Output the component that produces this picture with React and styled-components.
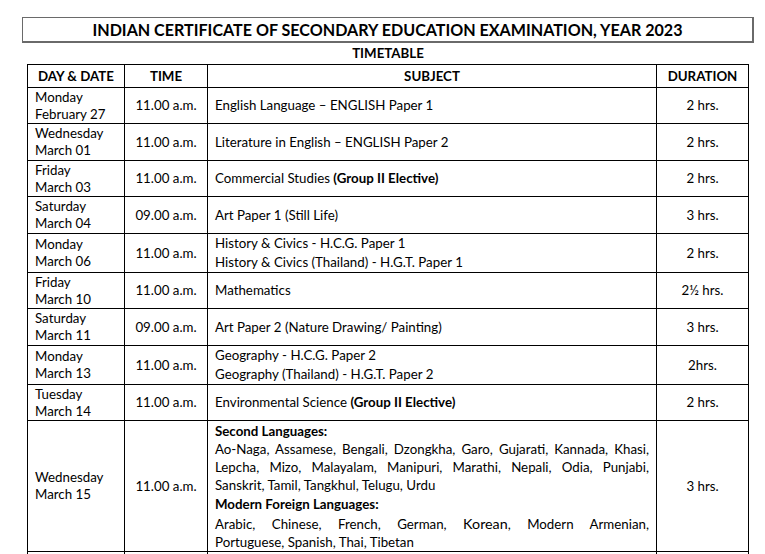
import React from 'react';
import styled, { createGlobalStyle } from 'styled-components';

const GlobalStyle = createGlobalStyle`
  html, body {
    margin: 0;
    padding: 0;
    background: #fff;
  }
  body {
    font-family: Lato, 'Open Sans', sans-serif;
    color: #000;
    overflow: hidden;
  }
`;

const rows = [
  { day: 'Monday', date: 'February 27', time: '11.00 a.m.', subject: ['English Language – ENGLISH Paper 1'], duration: '2 hrs.', h: 36 },
  { day: 'Wednesday', date: 'March 01', time: '11.00 a.m.', subject: ['Literature in English – ENGLISH Paper 2'], duration: '2 hrs.', h: 37 },
  { day: 'Friday', date: 'March 03', time: '11.00 a.m.', subject: ['Commercial Studies '], bold: '(Group II Elective)', duration: '2 hrs.', h: 36 },
  { day: 'Saturday', date: 'March 04', time: '09.00 a.m.', subject: ['Art Paper 1 (Still Life)'], duration: '3 hrs.', h: 37 },
  { day: 'Monday', date: 'March 06', time: '11.00 a.m.', subject: ['History & Civics - H.C.G. Paper 1', 'History & Civics (Thailand) - H.G.T. Paper 1'], duration: '2 hrs.', h: 39 },
  { day: 'Friday', date: 'March 10', time: '11.00 a.m.', subject: ['Mathematics'], duration: '2½ hrs.', h: 36 },
  { day: 'Saturday', date: 'March 11', time: '09.00 a.m.', subject: ['Art Paper 2 (Nature Drawing/ Painting)'], duration: '3 hrs.', h: 37 },
  { day: 'Monday', date: 'March 13', time: '11.00 a.m.', subject: ['Geography - H.C.G. Paper 2', 'Geography (Thailand) - H.G.T. Paper 2'], duration: '2hrs.', h: 39 },
  { day: 'Tuesday', date: 'March 14', time: '11.00 a.m.', subject: ['Environmental Science '], bold: '(Group II Elective)', duration: '2 hrs.', h: 36 },
];

const App = () => {
  return (
    <>
      <GlobalStyle />
      <Page>
        <TitleBox>INDIAN CERTIFICATE OF SECONDARY EDUCATION EXAMINATION, YEAR 2023</TitleBox>
        <SubTitle>TIMETABLE</SubTitle>
        <Table>
          <colgroup>
            <col style={{ width: 97 }} />
            <col style={{ width: 83 }} />
            <col style={{ width: 449 }} />
            <col style={{ width: 92 }} />
          </colgroup>
          <thead>
            <tr>
              <Th>DAY &amp; DATE</Th>
              <Th>TIME</Th>
              <Th>SUBJECT</Th>
              <Th>DURATION</Th>
            </tr>
          </thead>
          <tbody>
            {rows.map((r, i) => (
              <Row key={i} $h={r.h}>
                <DayCell>
                  {r.day}
                  <br />
                  {r.date}
                </DayCell>
                <CenterCell>{r.time}</CenterCell>
                <SubjectCell>
                  {r.subject.length > 1 ? (
                    r.subject.map((s, j) => <SubLine key={j}>{s}</SubLine>)
                  ) : (
                    <>
                      {r.subject[0]}
                      {r.bold && <b>{r.bold}</b>}
                    </>
                  )}
                </SubjectCell>
                <CenterCell>{r.duration}</CenterCell>
              </Row>
            ))}
            <Row $h={131}>
              <DayCell>
                Wednesday
                <br />
                March 15
              </DayCell>
              <CenterCell>11.00 a.m.</CenterCell>
              <LangCell>
                <LangHead>Second Languages:</LangHead>
                <LangLine $full>Ao-Naga, Assamese, Bengali, Dzongkha, Garo, Gujarati, Kannada, Khasi,</LangLine>
                <LangLine $full>Lepcha, Mizo, Malayalam, Manipuri, Marathi, Nepali, Odia, Punjabi,</LangLine>
                <LangLine>Sanskrit, Tamil, Tangkhul, Telugu, Urdu</LangLine>
                <LangHead $gap>Modern Foreign Languages:</LangHead>
                <LangLine $full $gap>
                  Arabic, Chinese, French, German, <Big>Korean</Big>, Modern Armenian,
                </LangLine>
                <LangLine>Portuguese, Spanish, Thai, Tibetan</LangLine>
              </LangCell>
              <CenterCell>3 hrs.</CenterCell>
            </Row>
            <Row $h={30}>
              <DayCell />
              <CenterCell />
              <SubjectCell />
              <CenterCell />
            </Row>
          </tbody>
        </Table>
      </Page>
    </>
  );
};

export default App;

const Page = styled.div`
  padding: 17px 0 0 22px;
  width: 732px;
`;

const TitleBox = styled.div`
  box-sizing: border-box;
  width: 732px;
  height: 26px;
  border: 1px solid #6a6a6a;
  border-right-width: 2px;
  border-bottom-width: 2px;
  text-align: center;
  font-weight: 700;
  font-size: 16.1px;
  line-height: 23px;
`;

const SubTitle = styled.div`
  text-align: center;
  font-weight: 700;
  font-size: 13.3px;
  line-height: 20px;
  height: 21px;
`;

const Table = styled.table`
  margin-left: 5px;
  width: 722px;
  border-collapse: collapse;
  table-layout: fixed;
  font-size: 13.3px;
  line-height: 17px;
  td, th {
    border: 1px solid #000;
  }
`;

const Th = styled.th`
  height: 22px;
  padding: 0;
  font-weight: 700;
  text-align: center;
  line-height: 22px;
`;

const Row = styled.tr`
  height: ${p => p.$h}px;
`;

const DayCell = styled.td`
  padding: 0 0 0 7px;
  line-height: 17px;
  vertical-align: middle;
`;

const CenterCell = styled.td`
  padding: 0;
  text-align: center;
  vertical-align: middle;
`;

const SubjectCell = styled.td`
  padding: 0 7px;
  vertical-align: middle;
  b {
    font-weight: 700;
  }
`;

const SubLine = styled.div`
  line-height: 19px;
`;

const LangCell = styled.td`
  padding: 0 7px;
  vertical-align: middle;
`;

const LangHead = styled.div`
  font-weight: 700;
  line-height: 18px;
  margin-top: ${p => (p.$gap ? '1px' : '0')};
`;

const LangLine = styled.div`
  line-height: 18px;
  margin-top: ${p => (p.$gap ? '2px' : '0')};
  text-align: ${p => (p.$full ? 'justify' : 'left')};
  text-align-last: ${p => (p.$full ? 'justify' : 'left')};
`;

const Big = styled.span`
  font-size: 14.3px;
  line-height: 0;
`;
